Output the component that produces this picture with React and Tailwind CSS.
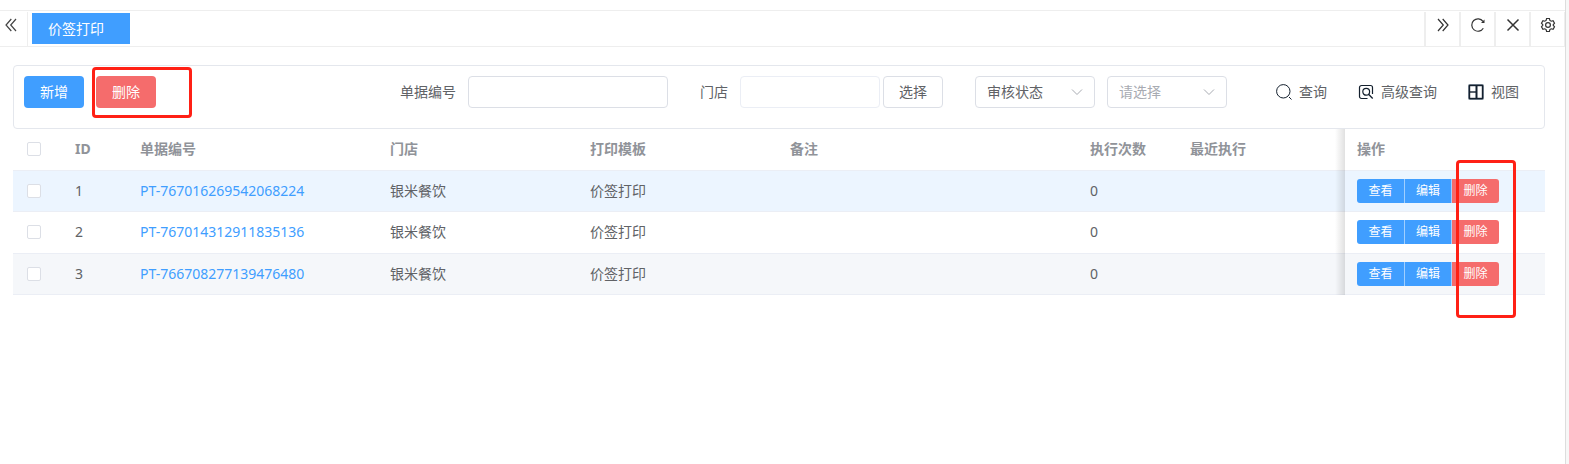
import React, { useState } from 'react'

const initialRows = [
    { id: 1, no: 'PT-767016269542068224', store: '银米餐饮', template: '价签打印', remark: '', count: 0, last: '' },
    { id: 2, no: 'PT-767014312911835136', store: '银米餐饮', template: '价签打印', remark: '', count: 0, last: '' },
    { id: 3, no: 'PT-766708277139476480', store: '银米餐饮', template: '价签打印', remark: '', count: 0, last: '' },
];

const fixedCell = 'relative px-3 before:absolute before:top-0 before:-bottom-px before:-left-[10px] before:w-[10px] before:bg-linear-to-r before:from-transparent before:to-black/12';

function Icon({ children, className = 'size-4' }) {
    return (
        <svg viewBox="0 0 16 16" fill="none" stroke="currentColor" className={className} aria-hidden="true">
            {children}
        </svg>
    );
}

function TabBarButton({ label, children }) {
    return (
        <button aria-label={label} className="flex w-[35px] justify-center border-l-2 border-[#eeeeee] pt-[5px] text-[#333333]">
            {children}
        </button>
    );
}

function TabBar() {
    return (
        <nav className="mt-[10px] flex h-[37px] border-y border-[#eeeeee] pt-px">
            <button aria-label="向左" className="flex w-7 border-r border-[#eeeeee] pt-[5px] pl-[3px] text-[#444444]">
                <Icon>
                    <path d="M8.300 2 3 8l5.300 6M13 2 7.700 8l5.300 6" strokeWidth="1.200" />
                </Icon>
            </button>
            <a href="#print" className="mt-px ml-1 h-[31px] bg-[#409eff] pr-[26px] pl-4 text-sm/[31px] text-white">价签打印</a>
            <div className="ml-auto flex border-r border-[#eeeeee]">
                <TabBarButton label="向右">
                    <Icon>
                        <path d="M3 2l5.300 6L3 14M7.700 2 13 8l-5.300 6" strokeWidth="1.200" />
                    </Icon>
                </TabBarButton>
                <TabBarButton label="刷新">
                    <Icon>
                        <path d="M13.300 11.200A6.200 6.200 0 1 1 13 4.400" strokeWidth="1.200" />
                        <path d="M14.500 2.500v3.500H11z" fill="currentColor" stroke="none" />
                    </Icon>
                </TabBarButton>
                <TabBarButton label="关闭">
                    <Icon>
                        <path d="m2.500 2.500 11 11M13.500 2.500l-11 11" strokeWidth="1.500" />
                    </Icon>
                </TabBarButton>
                <TabBarButton label="设置">
                    <Icon>
                        <path d="M6.600 1.500h2.800l.5 1.900 1.300.8 1.900-.6 1.400 2.500L13.100 8l1.400 1.900-1.400 2.500-1.900-.6-1.300.8-.5 1.900H6.600l-.5-1.900-1.300-.8-1.900.6-1.400-2.500L2.900 8 1.500 6.100l1.400-2.500 1.900.6 1.300-.8z" strokeWidth="1.200" />
                        <circle cx="8" cy="8" r="2.400" strokeWidth="1.200" />
                    </Icon>
                </TabBarButton>
            </div>
        </nav>
    );
}

function Select({ label, className, children }) {
    return (
        <div className="relative">
            <select
                aria-label={label}
                className={`block h-8 w-[120px] appearance-none rounded border border-[#dcdfe6] bg-white px-[11px] text-sm ${className}`}
            >
                {children}
            </select>
            <svg viewBox="0 0 12 12" fill="none" stroke="#a8abb2" className="pointer-events-none absolute top-[10px] right-3 size-3" aria-hidden="true">
                <path d="m1 3.500 5 5 5-5" />
            </svg>
        </div>
    );
}

function LinkButton({ text, children }) {
    return (
        <button className="flex h-8 items-center gap-[7px] pr-[15px] pl-4 text-sm text-[#606266]">
            <span className="text-[#14202e]">{children}</span>
            {text}
        </button>
    );
}

function Toolbar() {
    return (
        <section className="flex h-16 items-start rounded border border-[#e4e7ed] p-[10px] text-sm text-[#606266]">
            <button className="h-8 w-[60px] rounded bg-[#409eff] text-white">新增</button>
            <div className="relative ml-3">
                <button className="h-8 w-[60px] rounded bg-[#f56c6c] text-white">删除</button>
                <div className="pointer-events-none absolute -top-[9px] -left-1 h-[51px] w-[100px] rounded-sm border-3 border-[#ff2015]" />
            </div>

            <form className="ml-auto flex items-center" onSubmit={(e) => e.preventDefault()}>
                <label htmlFor="billNo" className="mr-3">单据编号</label>
                <input id="billNo" className="h-8 w-[200px] rounded border border-[#dcdfe6] px-[11px] outline-none" />
                <label htmlFor="store" className="mr-3 ml-8">门店</label>
                <input id="store" readOnly className="h-8 w-[140px] rounded border border-[#ebeef5] px-[11px] outline-none" />
                <button type="button" className="ml-[3px] h-8 w-[60px] rounded border border-[#dcdfe6]">选择</button>
                <div className="mr-[33px] ml-8 flex gap-3">
                    <Select label="条件" className="text-[#606266]">
                        <option>审核状态</option>
                    </Select>
                    <Select label="状态" className="text-[#a8abb2]">
                        <option>请选择</option>
                    </Select>
                </div>
                <LinkButton text="查询">
                    <Icon>
                        <circle cx="7.300" cy="7.300" r="6.700" />
                        <path d="m13 13 2.500 2.500" />
                    </Icon>
                </LinkButton>
                <LinkButton text="高级查询">
                    <Icon>
                        <path d="M9.500 14.500h-6a2 2 0 0 1-2-2v-9a2 2 0 0 1 2-2h9a2 2 0 0 1 2 2V10" strokeWidth="1.200" />
                        <circle cx="8.200" cy="7.800" r="3.400" strokeWidth="1.200" />
                        <path d="m10.800 10.500 3.900 4" strokeWidth="1.300" />
                    </Icon>
                </LinkButton>
                <LinkButton text="视图">
                    <Icon>
                        <rect x=".5" y=".5" width="15" height="15" rx="1" stroke="#7d8a97" />
                        <rect x="1.500" y="1.500" width="13" height="13" strokeWidth="1.400" />
                        <path d="M8.500 2v12" strokeWidth="2" />
                        <path d="M2 8h6" strokeWidth="1.400" />
                    </Icon>
                </LinkButton>
            </form>
        </section>
    );
}

function Checkbox({ label, checked, onChange }) {
    return (
        <input
            type="checkbox"
            aria-label={label}
            checked={checked}
            onChange={onChange}
            className="ml-[14px] block size-[14px] appearance-none rounded-xs border border-[#dcdfe6] bg-white checked:border-[#409eff] checked:bg-[#409eff]"
        />
    );
}

export default function App() {
    const [selected, setSelected] = useState([]);

    const toggle = (id) => {
        setSelected(prev => (prev.includes(id) ? prev.filter(x => x !== id) : [...prev, id]));
    };

    const toggleAll = () => {
        setSelected(selected.length === initialRows.length ? [] : initialRows.map(row => row.id));
    };

    return (
        <div className="flex min-h-screen bg-white font-['Noto_Sans','Noto_Sans_CJK_SC',sans-serif]">
            <div className="min-w-0 flex-1">
                <TabBar />
                <main className="mt-[18px] mr-5 ml-[13px]">
                    <Toolbar />

                    <div className="relative">
                        <table className="w-full table-fixed border-collapse text-left text-sm text-[#606266]">
                            <colgroup>
                                <col className="w-[50px]" />
                                <col className="w-[65px]" />
                                <col className="w-[250px]" />
                                <col className="w-[200px]" />
                                <col className="w-[200px]" />
                                <col className="w-[300px]" />
                                <col className="w-[100px]" />
                                <col />
                                <col className="w-[200px]" />
                            </colgroup>
                            <thead className="text-[#909399]">
                                <tr className="h-[41px] border-b border-[#ebeef5]">
                                    <th>
                                        <Checkbox
                                            label="全选"
                                            checked={selected.length === initialRows.length}
                                            onChange={toggleAll}
                                        />
                                    </th>
                                    <th className="px-3">ID</th>
                                    <th className="px-3">单据编号</th>
                                    <th className="px-3">门店</th>
                                    <th className="px-3">打印模板</th>
                                    <th className="px-3">备注</th>
                                    <th className="px-3">执行次数</th>
                                    <th className="px-3">最近执行</th>
                                    <th className={fixedCell}>操作</th>
                                </tr>
                            </thead>
                            <tbody>
                                {initialRows.map(row => (
                                    <tr key={row.id} className="h-[41px] border-b border-[#ebeef5] first:bg-[#ecf5ff] last:bg-[#f5f7fa] even:h-[42px]">
                                        <td>
                                            <Checkbox
                                                label={`选择 ${row.id}`}
                                                checked={selected.includes(row.id)}
                                                onChange={() => toggle(row.id)}
                                            />
                                        </td>
                                        <td className="px-3">{row.id}</td>
                                        <td className="px-3">
                                            <a href={`#${row.no}`} className="text-[#409eff]">{row.no}</a>
                                        </td>
                                        <td className="px-3">{row.store}</td>
                                        <td className="px-3">{row.template}</td>
                                        <td className="px-3">{row.remark}</td>
                                        <td className="px-3">{row.count}</td>
                                        <td className="px-3">{row.last}</td>
                                        <td className={fixedCell}>
                                            <div className="flex text-xs text-white">
                                                <button className="h-6 w-12 rounded-l-[3px] border-r border-[#a0cfff] bg-[#409eff]">查看</button>
                                                <button className="h-6 w-[47px] border-r border-[#a0cfff] bg-[#409eff]">编辑</button>
                                                <button className="h-6 w-[47px] rounded-r-[3px] bg-[#f56c6c]">删除</button>
                                            </div>
                                        </td>
                                    </tr>
                                ))}
                            </tbody>
                        </table>
                        <div className="pointer-events-none absolute top-[31px] right-[29px] h-[158px] w-[60px] rounded-sm border-3 border-[#ff2015]" />
                    </div>
                </main>
            </div>
            <aside className="w-1 border-l border-[#dddddd] bg-[#f7f7f7]" />
        </div>
    );
}
